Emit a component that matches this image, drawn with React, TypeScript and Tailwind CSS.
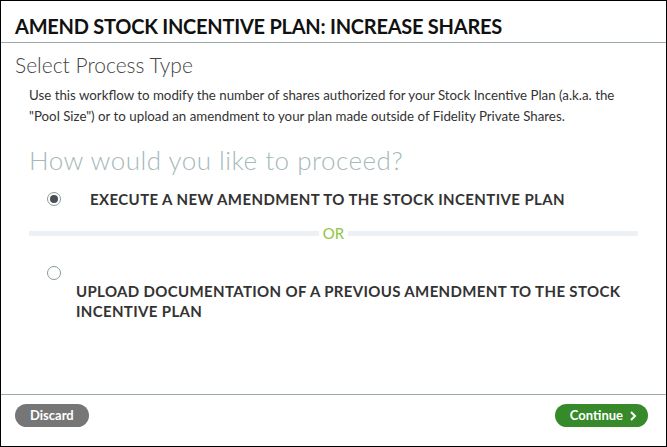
export default function App() {
  return (
    <div
      className="w-[667px] h-[447px] border border-black bg-white flex flex-col text-[#333]"
      style={{ fontFamily: "Lato, 'Liberation Sans', sans-serif" }}
    >
      <div className="h-[42px] border-b border-[#9aa9a9] px-[14px] pt-[13px]">
        <h1 className="text-[20px] leading-[24px] font-bold text-[#111] tracking-[-0.25px]">
          AMEND STOCK INCENTIVE PLAN: INCREASE SHARES
        </h1>
      </div>

      <div className="flex-1 flex flex-col">
        <h2 className="px-[14px] pt-[10px] text-[21px] leading-[24px] font-light text-[#444]">
          Select Process Type
        </h2>
        <p className="pl-[28px] pr-[10px] pt-[8px] text-[13.3px] leading-[21px] text-[#333]">
          Use this workflow to modify the number of shares authorized for your Stock Incentive Plan (a.k.a. the
          <br />
          "Pool Size") or to upload an amendment to your plan made outside of Fidelity Private Shares.
        </p>
        <h3 className="pl-[28px] pt-[19px] text-[26px] leading-[28px] font-light text-[#a6b9b9] tracking-[0.5px]">
          How would you like to proceed?
        </h3>

        <label className="flex items-center pl-[46px] pt-[15px]">
          <span className="w-[14px] h-[14px] rounded-full border border-[#8a9a9a] flex items-center justify-center">
            <span className="w-[8px] h-[8px] rounded-full bg-[#4a4f55]" />
          </span>
          <span className="ml-[29px] text-[15px] leading-[20px] font-bold text-[#333] tracking-[0.4px]">
            EXECUTE A NEW AMENDMENT TO THE STOCK INCENTIVE PLAN
          </span>
        </label>

        <div className="flex items-center mx-[28px] mt-[14px] h-[20px]">
          <div className="flex-1 h-[5px] bg-[#eef1f4]" />
          <span className="px-[4px] text-[15px] font-normal text-[#8dc63f]">OR</span>
          <div className="flex-1 h-[5px] bg-[#eef1f4]" />
        </div>

        <div className="pl-[46px] pt-[23px]">
          <span className="block w-[14px] h-[14px] rounded-full border border-[#8a9a9a]" />
        </div>
        <p className="pl-[75px] pr-[30px] pt-[1px] text-[15px] leading-[20px] font-bold text-[#333] tracking-[0.35px]">
          UPLOAD DOCUMENTATION OF A PREVIOUS AMENDMENT TO THE STOCK
          <br />
          INCENTIVE PLAN
        </p>
      </div>

      <div className="h-[52px] border-t border-[#9aa9a9] flex items-start justify-between pl-[14px] pr-[18px] pt-[9px]">
        <button className="h-[23px] px-[15px] rounded-full bg-[#767676] text-white text-[13px] font-bold">
          Discard
        </button>
        <button className="h-[23px] pl-[15px] pr-[11px] rounded-full bg-[#378a2a] text-white text-[13px] font-bold flex items-center gap-[6px]">
          Continue
          <svg width="8" height="10" viewBox="0 0 8 10" fill="none">
            <path d="M2 1 L6 5 L2 9" stroke="white" strokeWidth="2" />
          </svg>
        </button>
      </div>
    </div>
  );
}
